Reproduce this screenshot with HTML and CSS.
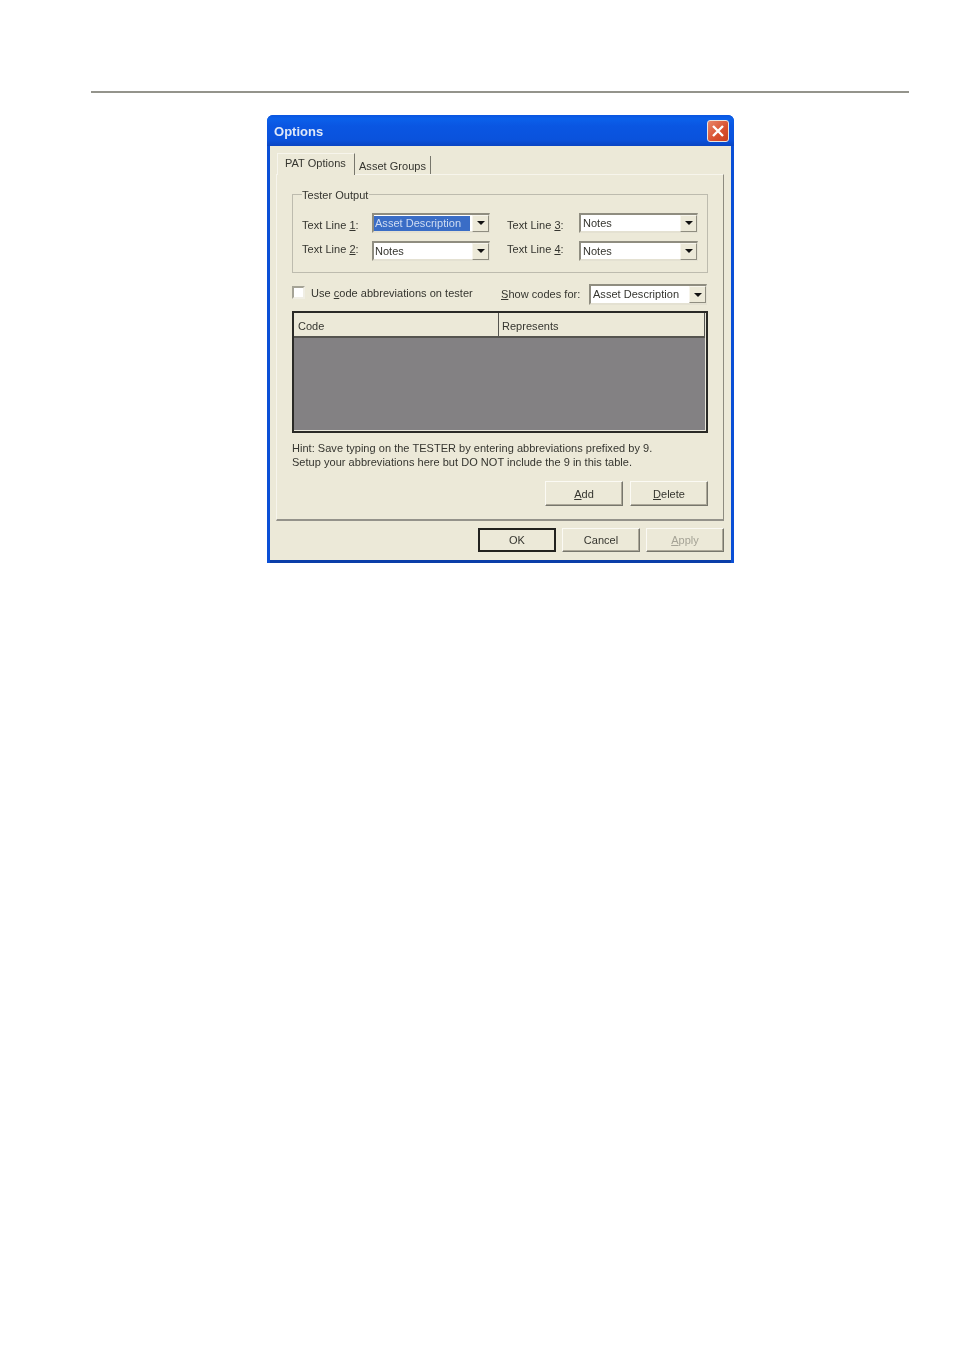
FILE: index.html
```html
<!DOCTYPE html>
<html lang="en">
<head>
<meta charset="utf-8">
<title>Options</title>
<link rel="stylesheet" href="styles.css">
</head>
<body>
<div class="page">
  <div class="rule"></div>
  <div class="window">
    <div class="titlebar">
      <span class="title">Options</span>
      <span class="close"><svg viewBox="0 0 20 20" width="20" height="20"><path d="M5 5 L15 15 M15 5 L5 15" stroke="#fff" stroke-width="2.4" fill="none"/></svg></span>
    </div>
    <div class="client">
      <div class="tabs">
        <div class="tab active">PAT Options</div>
        <div class="tab">Asset Groups</div>
      </div>
      <div class="panel">
        <div class="group">
          <div class="legend">Tester Output</div>
          <div class="lines">
            <span class="label up-1">Text Line <u>1</u>:</span>
            <div class="combo"><span class="value selected">Asset Description</span><span class="drop"><svg viewBox="0 0 8 4" width="8" height="4"><path d="M0 0H8L4 4Z" fill="#111"/></svg></span></div>
            <span class="label second up-1">Text Line <u>3</u>:</span>
            <div class="combo"><span class="value wide">Notes</span><span class="drop"><svg viewBox="0 0 8 4" width="8" height="4"><path d="M0 0H8L4 4Z" fill="#111"/></svg></span></div>
            <span class="label up-2">Text Line <u>2</u>:</span>
            <div class="combo"><span class="value">Notes</span><span class="drop"><svg viewBox="0 0 8 4" width="8" height="4"><path d="M0 0H8L4 4Z" fill="#111"/></svg></span></div>
            <span class="label second up-2">Text Line <u>4</u>:</span>
            <div class="combo"><span class="value wide">Notes</span><span class="drop"><svg viewBox="0 0 8 4" width="8" height="4"><path d="M0 0H8L4 4Z" fill="#111"/></svg></span></div>
          </div>
        </div>
        <div class="codes-row">
          <div class="check-wrap"><span class="checkbox"></span><span>Use <u>c</u>ode abbreviations on tester</span></div>
          <div class="show-wrap"><span class="show-label"><u>S</u>how codes for:</span>
            <div class="combo combo-show"><span class="value wide">Asset Description</span><span class="drop"><svg viewBox="0 0 8 4" width="8" height="4"><path d="M0 0H8L4 4Z" fill="#111"/></svg></span></div>
          </div>
        </div>
        <div class="table">
          <div class="thead">
            <div class="th th-code">Code</div>
            <div class="th th-rep">Represents</div>
          </div>
          <div class="tbody"></div>
        </div>
        <p class="hint">Hint: Save typing on the TESTER by entering abbreviations prefixed by 9.<br>Setup your abbreviations here but DO NOT include the 9 in this table.</p>
        <div class="table-buttons">
          <div class="btn"><span><u>A</u>dd</span></div>
          <div class="btn"><span><u>D</u>elete</span></div>
        </div>
      </div>
      <div class="footer">
        <div class="btn btn-default"><span>OK</span></div>
        <div class="btn"><span>Cancel</span></div>
        <div class="btn btn-disabled"><span><u>A</u>pply</span></div>
      </div>
    </div>
  </div>
</div>
</body>
</html>
```
FILE: styles.css
```css
html, body { margin: 0; padding: 0; background: #fff; }
.page {
  width: 954px;
  height: 1351px;
  box-sizing: border-box;
  padding: 91px 45px 0 91px;
  font-family: "Liberation Sans", Arial, sans-serif;
  font-size: 11px;
  letter-spacing: 0.03px;
  color: #35352f;
  overflow: hidden;
}
.rule { height: 2px; background: #94948c; }
.window {
  width: 467px;
  height: 448px;
  margin: 22px 0 0 176px;
  box-sizing: border-box;
  border-radius: 6px 6px 0 0;
  background: #0a4fd6;
  display: flex;
  flex-direction: column;
  overflow: hidden;
  filter: blur(0.4px);
}
.titlebar {
  height: 31px;
  flex: none;
  box-sizing: border-box;
  padding: 0 5px 0 7px;
  display: flex;
  align-items: center;
  justify-content: space-between;
  background: linear-gradient(#0a55e0 0, #0b60ea 12%, #0a56e2 35%, #0a52dc 80%, #0a45c2 100%);
}
.title { font-weight: bold; font-size: 13px; color: #dfe8f8; position: relative; top: 1px; }
.close {
  width: 20px;
  height: 20px;
  border: 1px solid #e8e4e0;
  border-radius: 3px;
  background: linear-gradient(135deg, #e8866a, #d8502f 60%, #c9401f);
  display: flex;
}
.client {
  flex: 1;
  margin: 0 3px 3px;
  background: #ece9d8;
  box-shadow: 0 3px 0 #0a3ea8;
  padding: 6px 7px 0 6px;
  min-height: 0;
}
.tabs { display: flex; height: 22px; align-items: flex-end; padding-left: 1px; }
.tab {
  height: 18px;
  width: 76px;
  box-sizing: border-box;
  padding: 4px 0 0 4px;
  border-right: 1px solid #77766c;
  white-space: nowrap;
}
.tab.active {
  height: 22px;
  width: 78px;
  padding: 3px 0 0 7px;
  margin-bottom: -1px;
  position: relative;
  background: #ece9d8;
  border-right: 1px solid #77766c;
  border-top: 1px solid #f7f5ec;
  border-left: 1px solid #f7f5ec;
}
.panel {
  height: 347px;
  box-sizing: border-box;
  border: 1px solid #f7f5ec;
  border-right-color: #8d8b80;
  border-bottom: 2px solid #94928a;
  padding: 19px 15px 0;
}
.group {
  height: 79px;
  box-sizing: border-box;
  border: 1px solid #bdbbae;
  padding: 0 9px;
}
.legend {
  width: fit-content;
  margin-top: -7px;
  background: #ece9d8;
  padding-right: 1px;
  line-height: 14px;
}
.lines {
  display: grid;
  grid-template-columns: 70px 118px 89px 119px;
  row-gap: 8px;
  margin-top: 11px;
  align-items: center;
}
.label { white-space: nowrap; }
.second { padding-left: 17px; }
.up-1 { padding-top: 3px; }
.up-2 { padding-bottom: 5px; }
.combo {
  height: 20px;
  box-sizing: border-box;
  background: #fff;
  border: 2px solid;
  border-color: #8f8d80 #e4e1d2 #e4e1d2 #8f8d80;
  border-right-width: 1px;
  display: flex;
  align-items: center;
  justify-content: space-between;
}
.value { padding-left: 1px; line-height: 15px; }
.wide { padding-left: 2px; }
.selected { background: #3a6dc6; color: #cfdcf2; flex: 0 0 96px; box-sizing: border-box; }
.drop {
  width: 17px;
  height: 17px;
  box-sizing: border-box;
  background: #ece9d8;
  border: 1px solid;
  border-color: #f7f5ec #8f8d80 #8f8d80 #f7f5ec;
  display: flex;
  align-items: center;
  justify-content: center;
}
.codes-row {
  display: flex;
  align-items: center;
  justify-content: space-between;
  height: 21px;
  margin-top: 11px;
}
.check-wrap { display: flex; align-items: center; gap: 6px; position: relative; top: -2px; }
.checkbox {
  width: 13px;
  height: 13px;
  box-sizing: border-box;
  background: #fff;
  border: 2px solid;
  border-color: #a5a396 #f0eee4 #f0eee4 #a5a396;
}
.show-wrap { display: flex; align-items: center; margin-right: 1px; }
.show-label { width: 88px; position: relative; top: -1px; }
.combo-show { width: 118px; height: 21px; }
.table {
  height: 122px;
  margin-top: 6px;
  box-sizing: border-box;
  border: 2px solid #2a2a26;
  padding-right: 1px;
  display: flex;
  flex-direction: column;
  background: #e8e6da;
}
.thead { display: flex; height: 25px; flex: none; border-bottom: 2px solid #55544f; box-sizing: border-box; background: #ece9d8; }
.th { line-height: 26px; padding-left: 4px; box-sizing: border-box; }
.th-code { width: 205px; border-right: 1px solid #55544f; }
.th-rep { flex: 1; padding-left: 3px; border-right: 1px solid #55544f; }
.tbody { flex: 1; background: #838183; margin-bottom: 1px; }
.hint { margin: 9px 0 0; line-height: 13.5px; height: 27px; }
.table-buttons { display: flex; justify-content: flex-end; gap: 7px; margin-top: 12px; }
.btn {
  width: 78px;
  height: 25px;
  box-sizing: border-box;
  border: 1px solid;
  border-color: #fbfaf4 #77766c #77766c #fbfaf4;
  box-shadow: inset -1px -1px 0 #aca899;
  display: flex;
  align-items: center;
  justify-content: center;
}
.footer { display: flex; justify-content: flex-end; gap: 6px; padding-top: 7px; }
.footer .btn { height: 24px; padding-bottom: 1px; }
.footer .btn-default { border: 2px solid #22221f; box-shadow: none; }
.btn-disabled { color: #a5a396; }
```
